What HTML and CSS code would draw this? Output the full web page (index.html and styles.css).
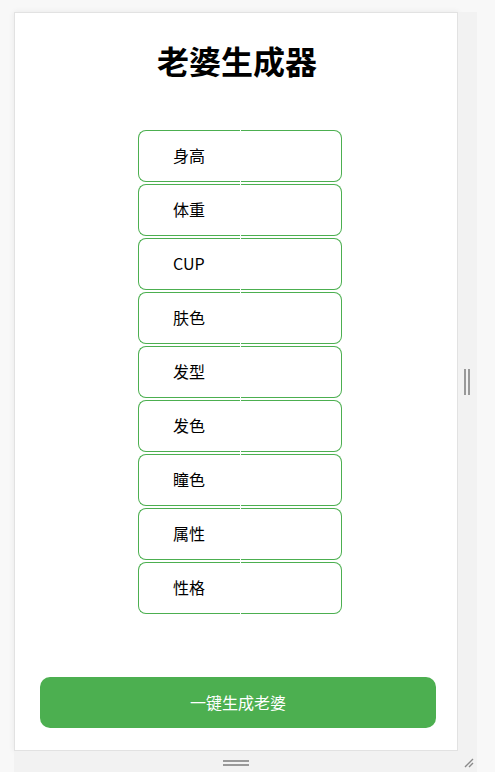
FILE: index.html
```html
<!DOCTYPE html>
<html lang="zh">
<head>
<meta charset="utf-8">
<title>老婆生成器</title>
<link rel="stylesheet" href="styles.css">
</head>
<body>
<div class="frame">
  <main class="card">
    <h1 class="title">老婆生成器</h1>
    <div class="fields">
      <div class="field"><span class="half left">身高</span><span class="half right"></span></div>
      <div class="field"><span class="half left">体重</span><span class="half right"></span></div>
      <div class="field"><span class="half left">CUP</span><span class="half right"></span></div>
      <div class="field"><span class="half left">肤色</span><span class="half right"></span></div>
      <div class="field"><span class="half left">发型</span><span class="half right"></span></div>
      <div class="field"><span class="half left">发色</span><span class="half right"></span></div>
      <div class="field"><span class="half left">瞳色</span><span class="half right"></span></div>
      <div class="field"><span class="half left">属性</span><span class="half right"></span></div>
      <div class="field"><span class="half left">性格</span><span class="half right"></span></div>
    </div>
    <button class="generate">一键生成老婆</button>
  </main>
  <div class="gutter-right"><span class="vhandle"></span></div>
  <div class="gutter-bottom"><span class="hhandle"></span></div>
  <div class="corner">
    <svg width="12" height="12" viewBox="0 0 12 12"><path d="M11 3 L3 11 M11 7 L7 11" stroke="#8a8a8a" stroke-width="1.4" fill="none"/></svg>
  </div>
</div>
</body>
</html>
```
FILE: styles.css
```css
html, body {
  margin: 0;
  padding: 0;
  background: #f8f8f8;
}
body {
  font-family: "Noto Sans CJK SC", "Noto Sans", sans-serif;
  color: #000;
}
.frame {
  display: grid;
  grid-template-columns: 444px 19px;
  grid-template-rows: 739px 21px;
  padding: 12px 0 0 14px;
}
.card {
  background: #fff;
  border: 1px solid #e2e2e2;
  box-shadow: 0 0 6px rgba(0, 0, 0, 0.07);
  display: flex;
  flex-direction: column;
  box-sizing: border-box;
}
.title {
  margin: 27px 0 0;
  font-size: 32px;
  line-height: 40px;
  font-weight: 700;
  text-align: center;
  padding-left: 2px;
}
.fields {
  margin: 50px 0 0 123px;
  display: flex;
  flex-direction: column;
  gap: 2px;
  width: 204px;
}
.field {
  display: flex;
  gap: 1px;
  height: 52px;
}
.half {
  box-sizing: border-box;
  height: 52px;
  border: 1px solid #4caf50;
  font-size: 16px;
  display: flex;
  align-items: center;
}
.left {
  width: 102px;
  border-right: none;
  border-radius: 8px 0 0 8px;
  padding-left: 34px;
  padding-bottom: 3px;
}
.right {
  width: 101px;
  border-left: none;
  border-radius: 0 8px 8px 0;
}
.generate {
  margin: auto 21px 22px 25px;
  height: 51px;
  border: none;
  border-radius: 10px;
  background: #4caf50;
  color: #fff;
  font-family: "Noto Sans CJK SC", sans-serif;
  font-size: 16px;
  padding-bottom: 2px;
}
.gutter-right {
  background: #f2f2f2;
  display: flex;
  align-items: center;
  justify-content: center;
}
.vhandle {
  width: 6px;
  height: 26px;
  border-left: 2px solid #999;
  border-right: 2px solid #999;
  box-sizing: border-box;
  margin-right: 2px;
}
.gutter-bottom {
  background: #f2f2f2;
  display: flex;
  align-items: center;
  justify-content: center;
}
.hhandle {
  width: 26px;
  height: 6px;
  border-top: 2px solid #999;
  border-bottom: 2px solid #999;
  box-sizing: border-box;
  margin-top: 2px;
}
.corner {
  background: #f2f2f2;
  display: flex;
  align-items: center;
  justify-content: center;
}
```
